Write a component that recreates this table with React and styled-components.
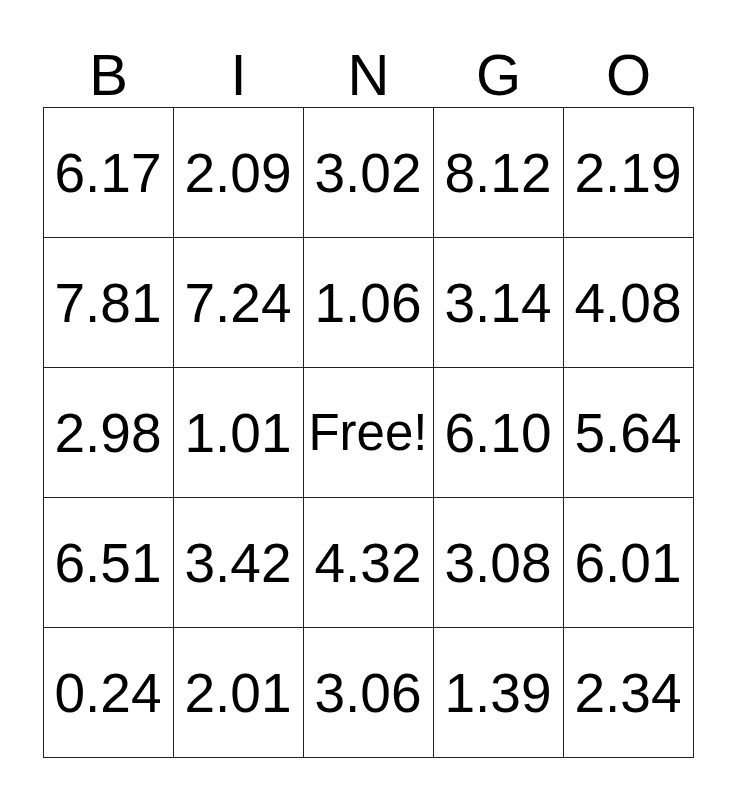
import React from "react";
import styled, { createGlobalStyle } from "styled-components";

const GlobalStyle = createGlobalStyle`
  body {
    margin: 0;
    background: #ffffff;
    font-family: "Liberation Sans", Arial, sans-serif;
  }
`;

const Card = styled.div`
  width: 651px;
  margin: 0 auto;
  padding-top: 43px;
`;

const Header = styled.div`
  display: grid;
  grid-template-columns: repeat(5, 130px);
  padding-left: 1px;
  height: 64px;
`;

const Letter = styled.div`
  text-align: center;
  font-size: 58px;
  line-height: 64px;
  color: #000;
`;

const Board = styled.div`
  display: grid;
  grid-template-columns: repeat(5, 130px);
  grid-auto-rows: 130px;
  border-top: 1px solid #222;
  border-left: 1px solid #222;
  width: 650px;
`;

const Cell = styled.div`
  box-sizing: border-box;
  display: flex;
  align-items: center;
  justify-content: center;
  border-right: 1px solid #222;
  border-bottom: 1px solid #222;
  font-size: ${props => (props.free ? "51px" : "55px")};
  color: #000;
  white-space: nowrap;
  overflow: hidden;
`;

const letters = ["B", "I", "N", "G", "O"];

const rows = [
  ["6.17", "2.09", "3.02", "8.12", "2.19"],
  ["7.81", "7.24", "1.06", "3.14", "4.08"],
  ["2.98", "1.01", "Free!", "6.10", "5.64"],
  ["6.51", "3.42", "4.32", "3.08", "6.01"],
  ["0.24", "2.01", "3.06", "1.39", "2.34"],
];

export default function App() {
  return (
    <>
      <GlobalStyle />
      <Card>
        <Header>
          {letters.map(l => (
            <Letter key={l}>{l}</Letter>
          ))}
        </Header>
        <Board>
          {rows.map((row, r) =>
            row.map((value, c) => (
              <Cell key={r + "-" + c} free={value === "Free!"}>
                {value}
              </Cell>
            ))
          )}
        </Board>
      </Card>
    </>
  );
}
